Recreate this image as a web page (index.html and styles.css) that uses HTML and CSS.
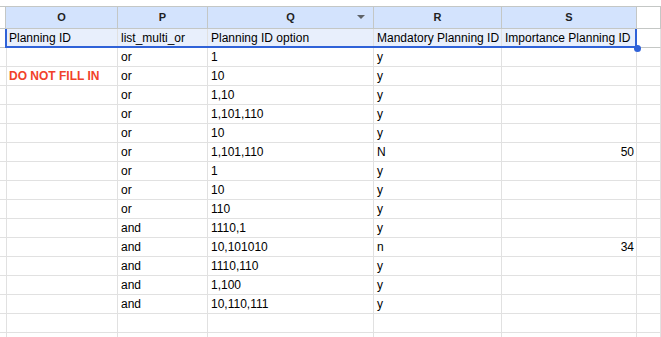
FILE: index.html
```html
<!DOCTYPE html>
<html>
<head>
<meta charset="utf-8">
<link rel="stylesheet" href="styles.css">
</head>
<body>
<div class="sheet">
  <div class="top"></div>
  <div class="row head">
    <div class="c blank"></div>
    <div class="c">O</div>
    <div class="c">P</div>
    <div class="c q">Q<span class="arrow"></span></div>
    <div class="c">R</div>
    <div class="c">S</div>
    <div class="c blank"></div>
  </div>
  <div class="row selrow">
    <div class="c"></div>
    <div class="c s">Planning ID</div>
    <div class="c s">list_multi_or</div>
    <div class="c s">Planning ID option</div>
    <div class="c s">Mandatory Planning ID</div>
    <div class="c s">Importance Planning ID</div>
    <div class="c"></div>
    <div class="sel"></div>
    <div class="dot"></div>
  </div>
  <div class="row"><div class="c"></div><div class="c"></div><div class="c">or</div><div class="c">1</div><div class="c">y</div><div class="c"></div><div class="c"></div></div>
  <div class="row"><div class="c"></div><div class="c red">DO NOT FILL IN</div><div class="c">or</div><div class="c">10</div><div class="c">y</div><div class="c"></div><div class="c"></div></div>
  <div class="row"><div class="c"></div><div class="c"></div><div class="c">or</div><div class="c">1,10</div><div class="c">y</div><div class="c"></div><div class="c"></div></div>
  <div class="row"><div class="c"></div><div class="c"></div><div class="c">or</div><div class="c">1,101,110</div><div class="c">y</div><div class="c"></div><div class="c"></div></div>
  <div class="row"><div class="c"></div><div class="c"></div><div class="c">or</div><div class="c">10</div><div class="c">y</div><div class="c"></div><div class="c"></div></div>
  <div class="row"><div class="c"></div><div class="c"></div><div class="c">or</div><div class="c">1,101,110</div><div class="c">N</div><div class="c num">50</div><div class="c"></div></div>
  <div class="row"><div class="c"></div><div class="c"></div><div class="c">or</div><div class="c">1</div><div class="c">y</div><div class="c"></div><div class="c"></div></div>
  <div class="row"><div class="c"></div><div class="c"></div><div class="c">or</div><div class="c">10</div><div class="c">y</div><div class="c"></div><div class="c"></div></div>
  <div class="row"><div class="c"></div><div class="c"></div><div class="c">or</div><div class="c">110</div><div class="c">y</div><div class="c"></div><div class="c"></div></div>
  <div class="row"><div class="c"></div><div class="c"></div><div class="c">and</div><div class="c">1110,1</div><div class="c">y</div><div class="c"></div><div class="c"></div></div>
  <div class="row"><div class="c"></div><div class="c"></div><div class="c">and</div><div class="c">10,101010</div><div class="c">n</div><div class="c num">34</div><div class="c"></div></div>
  <div class="row"><div class="c"></div><div class="c"></div><div class="c">and</div><div class="c">1110,110</div><div class="c">y</div><div class="c"></div><div class="c"></div></div>
  <div class="row"><div class="c"></div><div class="c"></div><div class="c">and</div><div class="c">1,100</div><div class="c">y</div><div class="c"></div><div class="c"></div></div>
  <div class="row"><div class="c"></div><div class="c"></div><div class="c">and</div><div class="c">10,110,111</div><div class="c">y</div><div class="c"></div><div class="c"></div></div>
  <div class="row"><div class="c"></div><div class="c"></div><div class="c"></div><div class="c"></div><div class="c"></div><div class="c"></div><div class="c"></div></div>
  <div class="row"><div class="c"></div><div class="c"></div><div class="c"></div><div class="c"></div><div class="c"></div><div class="c"></div><div class="c"></div></div>
</div>
</body>
</html>
```

FILE: styles.css
```css
html, body {
  margin: 0;
  padding: 0;
  background: #fff;
}
body {
  font-family: "Liberation Sans", Arial, sans-serif;
  font-size: 12px;
  color: #000;
  overflow: hidden;
}
.sheet {
  width: 661px;
}
.top {
  height: 7px;
  box-sizing: border-box;
  border-bottom: 1px solid #c4c7c5;
}
.row {
  display: grid;
  grid-template-columns: 6px 112px 90px 166px 128px 135px 1fr;
  height: 19px;
}
.c {
  box-sizing: border-box;
  border-right: 1px solid #e1e1e1;
  border-bottom: 1px solid #e1e1e1;
  padding: 1px 3px 0 3px;
  line-height: 17px;
  white-space: nowrap;
  overflow: hidden;
}
.head {
  height: 22px;
}
.head .c {
  border-color: #c4c7c5;
  background: #d3e3fd;
  font-weight: bold;
  font-size: 11px;
  color: #1f1f1f;
  text-align: center;
  padding: 0;
  line-height: 21px;
}
.head .c.blank {
  background: #fff;
}
.head .q {
  position: relative;
}
.arrow {
  position: absolute;
  right: 8px;
  top: 8px;
  width: 0;
  height: 0;
  border-left: 4px solid transparent;
  border-right: 4px solid transparent;
  border-top: 4px solid #5f6368;
}
.selrow {
  position: relative;
}
.selrow .c {
  border-bottom-color: #c4c7c5;
}
.selrow .c.s {
  background: #e8effc;
}
.sel {
  position: absolute;
  left: 5px;
  top: 0;
  width: 632px;
  height: 19px;
  box-sizing: border-box;
  border: 2px solid #2f62d8;
  border-top: none;
  pointer-events: none;
}
.dot {
  position: absolute;
  left: 634px;
  top: 16px;
  width: 7px;
  height: 7px;
  border-radius: 50%;
  background: #2f62d8;
}
.red {
  color: #f1412a;
  font-weight: bold;
}
.num {
  text-align: right;
  padding-right: 2px;
}
```
